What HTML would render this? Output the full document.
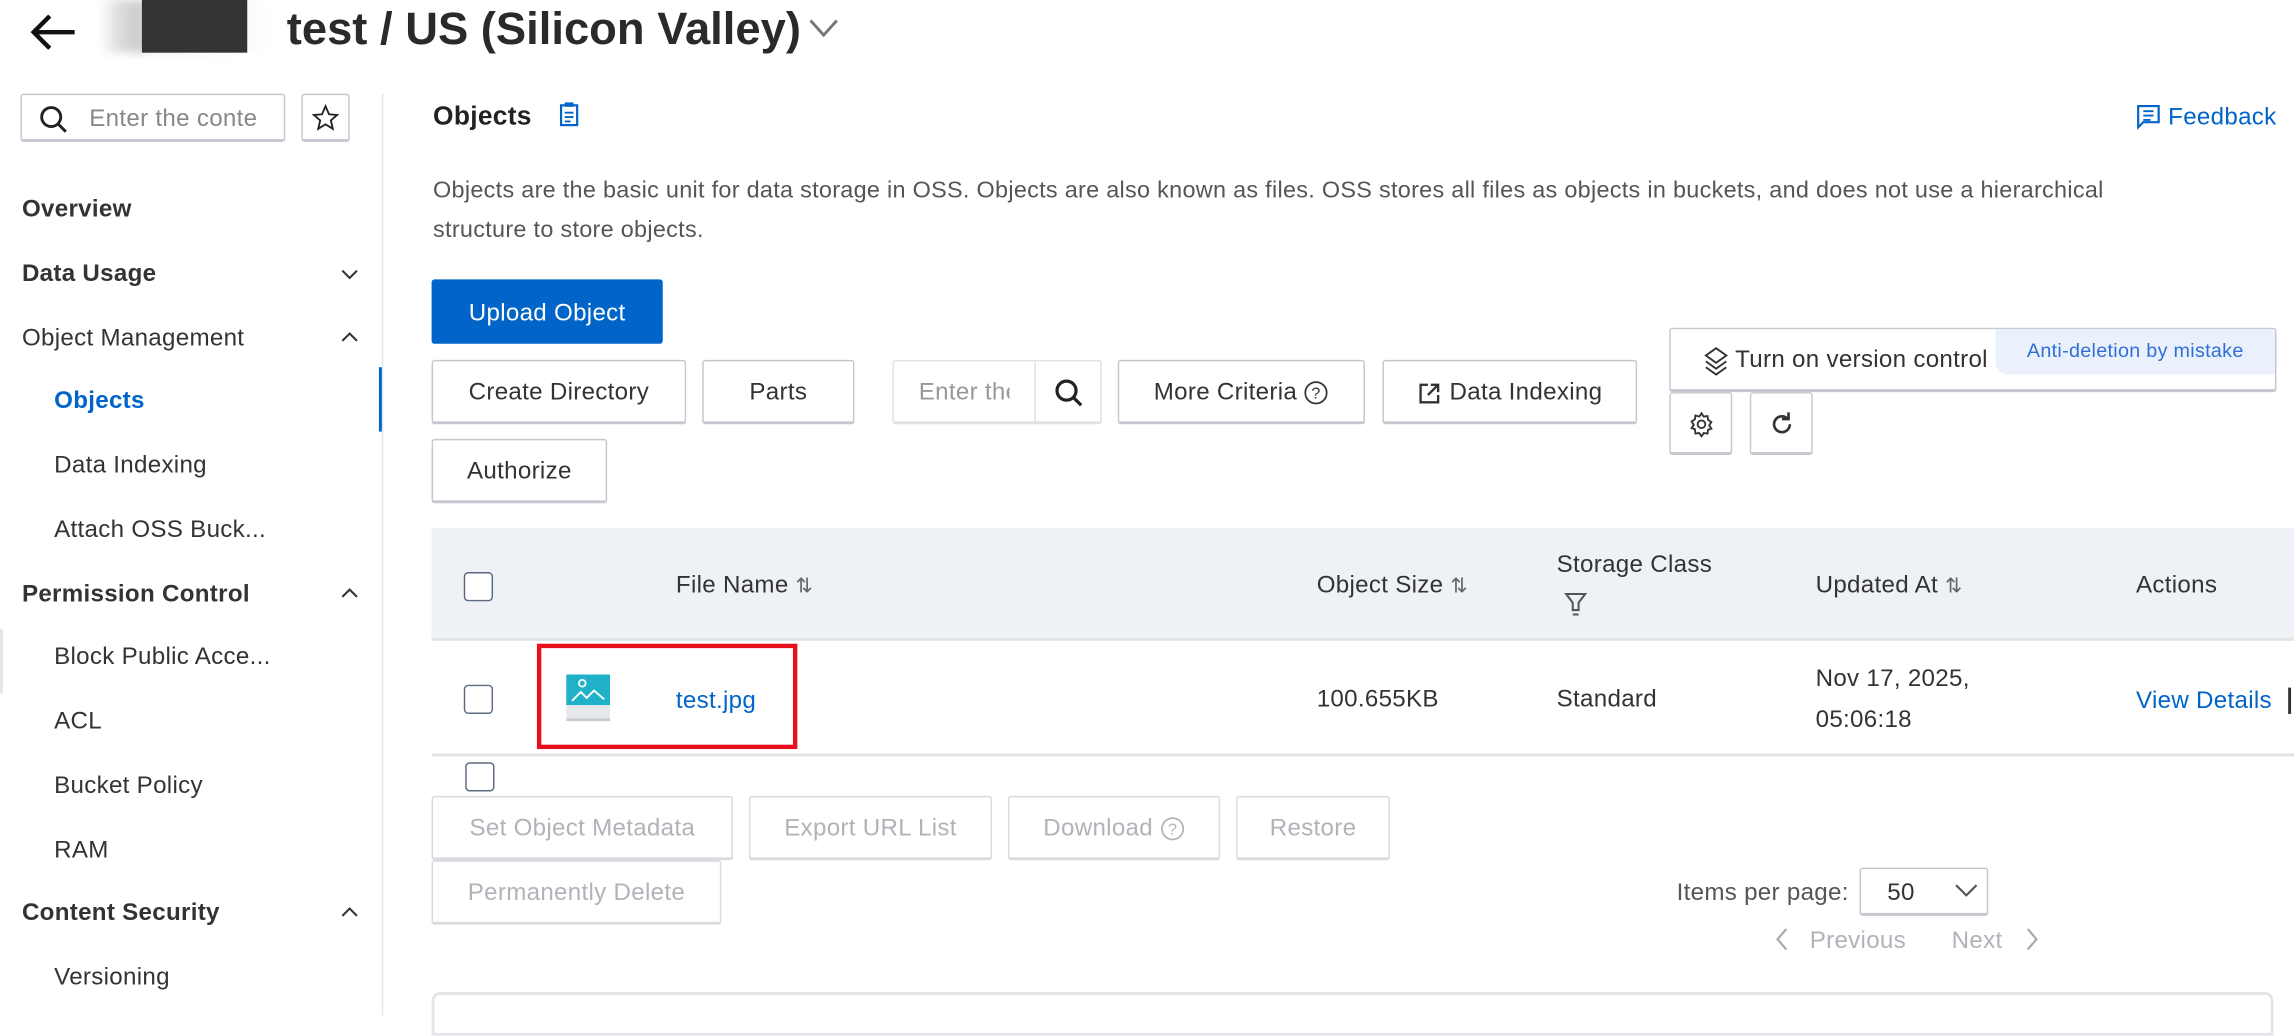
<!DOCTYPE html>
<html><head><meta charset="utf-8"><style>
html,body{margin:0;padding:0;background:#fff;overflow:hidden}
body{width:2294px;height:1016px}
#c{position:absolute;left:0;top:0;width:1568px;height:694px;transform:scale(1.46301);transform-origin:0 0;font-family:"Liberation Sans",sans-serif;color:#333;font-size:16.5px;letter-spacing:0.2px}
.a{position:absolute;white-space:nowrap}
.btn{position:absolute;box-sizing:border-box;border:1px solid #c5c8cf;border-bottom:2px solid #c5c8cf;border-radius:2px;background:#fff;display:flex;align-items:center;justify-content:center;font-size:16.5px;color:#333;white-space:nowrap;padding-top:2px}
.dis{color:#b0b3b8;border-color:#d8dade}
.nb{font-weight:bold;color:#333}
.cb{position:absolute;width:20px;height:20px;border:1.5px solid #5c6b80;border-radius:3px;box-sizing:border-box;background:#fff}
</style></head><body><div id="c">
<svg class="a" style="left:19px;top:8px" width="34" height="28" viewBox="0 0 34 28"><path d="M32 14H4M15 3L4 14l11 11" stroke="#111" stroke-width="3" fill="none"/></svg>
<div class="a" style="left:68px;top:0;width:130px;height:36px;background:linear-gradient(90deg,#fff,#ddd 10%,#ccc 20%,#e5e5e5 30%,#fff 90%);filter:blur(3px)"></div>
<div class="a" style="left:97px;top:0;width:72px;height:36px;background:#333"></div>
<div class="a" style="left:196px;top:2px;font-size:31px;font-weight:bold;color:#2a2a2a;letter-spacing:0px">test / US (Silicon Valley)</div>
<svg class="a" style="left:553px;top:12px" width="20" height="14"><path d="M1 2l9 10 9-10" stroke="#777" stroke-width="2" fill="none"/></svg>
<div class="a" style="left:14px;top:64px;width:181px;height:33px;border:1px solid #c5c8cf;border-bottom-width:2px;box-sizing:border-box;border-radius:2px"></div>
<svg class="a" style="left:26px;top:71px" width="22" height="22"><circle cx="9" cy="9" r="6.5" stroke="#222" stroke-width="2" fill="none"/><path d="M14 14l5 5" stroke="#222" stroke-width="2"/></svg>
<div class="a" style="left:61px;top:72px;color:#888;width:118px;overflow:hidden">Enter the conte</div>
<div class="a" style="left:206px;top:64px;width:33px;height:33px;border:1px solid #c5c8cf;border-bottom-width:2px;box-sizing:border-box;border-radius:2px"></div>
<svg class="a" style="left:213px;top:71px" width="19" height="19" viewBox="0 0 24 24"><path d="M12 2l3 7 7 .6-5.4 4.7 1.7 7.2L12 17.7 5.7 21.5l1.7-7.2L2 9.6 9 9z" stroke="#222" stroke-width="1.6" fill="none"/></svg>
<div class="a" style="left:261px;top:64px;width:1px;height:630px;background:#e3e5e8"></div>
<div class="a" style="left:259px;top:251px;width:2px;height:44px;background:#0064c8"></div>
<div class="a nb" style="left:15px;top:134px">Overview</div>
<div class="a nb" style="left:15px;top:178px">Data Usage</div>
<svg class="a" style="left:233px;top:183px" width="12" height="9"><path d="M1 2l5 5 5-5" stroke="#333" stroke-width="1.4" fill="none"/></svg>
<div class="a" style="left:15px;top:222px">Object Management</div>
<svg class="a" style="left:233px;top:226px" width="12" height="9"><path d="M1 7l5-5 5 5" stroke="#333" stroke-width="1.4" fill="none"/></svg>
<div class="a" style="left:37px;top:265px;color:#0064c8;font-weight:bold">Objects</div>
<div class="a" style="left:37px;top:309px">Data Indexing</div>
<div class="a" style="left:37px;top:353px">Attach OSS Buck...</div>
<div class="a nb" style="left:15px;top:397px">Permission Control</div>
<svg class="a" style="left:233px;top:401px" width="12" height="9"><path d="M1 7l5-5 5 5" stroke="#333" stroke-width="1.4" fill="none"/></svg>
<div class="a" style="left:0;top:430px;width:2px;height:44px;background:#e3e5e8"></div>
<div class="a" style="left:37px;top:440px">Block Public Acce...</div>
<div class="a" style="left:37px;top:484px">ACL</div>
<div class="a" style="left:37px;top:528px">Bucket Policy</div>
<div class="a" style="left:37px;top:572px">RAM</div>
<div class="a nb" style="left:15px;top:615px">Content Security</div>
<svg class="a" style="left:233px;top:619px" width="12" height="9"><path d="M1 7l5-5 5 5" stroke="#333" stroke-width="1.4" fill="none"/></svg>
<div class="a" style="left:37px;top:659px">Versioning</div>
<div class="a" style="left:296px;top:69px;font-size:18px;font-weight:bold;color:#222">Objects</div>
<svg class="a" style="left:382px;top:69px" width="14" height="18"><rect x="1.5" y="3" width="11" height="13.5" stroke="#0064c8" stroke-width="1.5" fill="none"/><rect x="4" y="1" width="6" height="3" fill="#0064c8"/><path d="M4 8h6M4 11h6M4 14h4" stroke="#0064c8" stroke-width="1.3"/></svg>
<svg class="a" style="left:1460px;top:71px" width="17" height="18"><path d="M1.5 1.5h14v11H5l-3.5 3.5z" stroke="#0064c8" stroke-width="1.5" fill="none"/><path d="M5 5h7M5 8h7M5 11h5" stroke="#0064c8" stroke-width="1.3"/></svg>
<div class="a" style="left:1482px;top:71px;color:#0064c8">Feedback</div>
<div class="a" style="left:296px;top:117px;font-size:16px;color:#555;line-height:27px;white-space:normal;width:1200px">Objects are the basic unit for data storage in OSS. Objects are also known as files. OSS stores all files as objects in buckets, and does not use a hierarchical structure to store objects.</div>
<div class="btn" style="left:295px;top:191px;width:158px;height:44px;background:#0064c8;border:none;color:#fff">Upload Object</div>
<div class="btn" style="left:295px;top:246px;width:174px;height:44px">Create Directory</div>
<div class="btn" style="left:480px;top:246px;width:104px;height:44px">Parts</div>
<div class="btn" style="left:610px;top:246px;width:143px;height:44px;border-color:#dfe1e5;justify-content:flex-start"><span style="color:#999;margin-left:17px;width:62px;overflow:hidden">Enter the</span></div>
<div class="a" style="left:707px;top:247px;width:1px;height:42px;background:#dfe1e5"></div>
<svg class="a" style="left:720px;top:258px" width="22" height="22"><circle cx="9" cy="9" r="6.5" stroke="#222" stroke-width="2.2" fill="none"/><path d="M14 14l5 5" stroke="#222" stroke-width="2.2"/></svg>
<div class="btn" style="left:764px;top:246px;width:169px;height:44px">More Criteria&nbsp;<svg width="17" height="17"><circle cx="8.5" cy="8.5" r="7.3" stroke="#333" stroke-width="1.2" fill="none"/><text x="8.5" y="12.5" font-size="11" text-anchor="middle" fill="#333" font-family="Liberation Sans">?</text></svg></div>
<div class="btn" style="left:945px;top:246px;width:174px;height:44px"><svg width="16" height="16" style="margin-right:6px"><path d="M7 2H2v12h12V9" stroke="#333" stroke-width="1.6" fill="none"/><path d="M9 2h5v5M14 2L7 9" stroke="#333" stroke-width="1.6" fill="none"/></svg>Data Indexing</div>
<div class="btn" style="left:1141px;top:224px;width:415px;height:44px;justify-content:flex-start"><svg width="18" height="20" style="margin-left:22px;margin-right:4px"><path d="M9 1l7 5-7 5-7-5z M2 10l7 5 7-5 M2 14l7 5 7-5" stroke="#333" stroke-width="1.3" fill="none"/></svg>Turn on version control</div>
<div class="a" style="left:1364px;top:225px;width:191px;height:31px;background:#eaf1fd;border-radius:0 2px 0 8px;color:#2f6fd6;font-size:13.5px;line-height:29px;text-align:center">Anti-deletion by mistake</div>
<div class="btn" style="left:1141px;top:268px;width:43px;height:43px"><svg width="18" height="18" viewBox="0 0 24 24"><path d="M12 2l2 3 3.5-.5.5 3.5 3 2-2 3 2 3-3 1-.5 3.5-3.5-.5-2 3-2-3-3.5.5L6 16.5 3 15.5l2-3-2-3 3-2 .5-3.5L10 5z" stroke="#333" stroke-width="1.7" fill="none"/><circle cx="12" cy="12" r="3.5" stroke="#333" stroke-width="1.7" fill="none"/></svg></div>
<div class="btn" style="left:1196px;top:268px;width:43px;height:43px"><svg width="18" height="18" viewBox="0 0 20 20"><path d="M16 10a6 6 0 1 1-2-4.5" stroke="#333" stroke-width="2" fill="none"/><path d="M15 1v5h-5" stroke="#333" stroke-width="2" fill="none"/></svg></div>
<div class="btn" style="left:295px;top:300px;width:120px;height:44px">Authorize</div>
<div class="a" style="left:295px;top:361px;width:1273px;height:75px;background:#eef1f6;border-bottom:2px solid #e2e4e8"></div>
<div class="cb" style="left:317px;top:391px"></div>
<div class="a" style="left:462px;top:391px">File Name <span style="color:#666;font-size:14px">⇅</span></div>
<div class="a" style="left:900px;top:391px">Object Size <span style="color:#666;font-size:14px">⇅</span></div>
<div class="a" style="left:1064px;top:377px">Storage Class</div>
<svg class="a" style="left:1069px;top:404px" width="16" height="18"><path d="M1.5 2h13l-4.5 6v5h-4V8z" stroke="#555" stroke-width="1.4" fill="none"/><path d="M6 16h4" stroke="#555" stroke-width="1.4"/></svg>
<div class="a" style="left:1241px;top:391px">Updated At <span style="color:#666;font-size:14px">⇅</span></div>
<div class="a" style="left:1460px;top:391px">Actions</div>
<div class="a" style="left:295px;top:515px;width:1273px;height:2px;background:#e2e4e8"></div>
<div class="cb" style="left:317px;top:468px"></div>
<div class="a" style="left:367px;top:440px;width:172px;height:66px;border:3px solid #e8101f"></div>
<svg class="a" style="left:387px;top:461px" width="30" height="32"><rect width="30" height="21" fill="#1fb1c8"/><rect y="21" width="30" height="10" fill="#e6e8eb"/><rect y="30" width="30" height="2" fill="#c8ccd0"/><circle cx="11" cy="6" r="2.3" stroke="#fff" stroke-width="1.2" fill="none"/><path d="M4 18l6-6 4 4 5-5 7 6" stroke="#fff" stroke-width="1.3" fill="none"/></svg>
<div class="a" style="left:462px;top:470px;color:#0064c8">test.jpg</div>
<div class="a" style="left:900px;top:469px">100.655KB</div>
<div class="a" style="left:1064px;top:469px">Standard</div>
<div class="a" style="left:1241px;top:455px">Nov 17, 2025,</div>
<div class="a" style="left:1241px;top:483px">05:06:18</div>
<div class="a" style="left:1460px;top:470px;color:#0064c8">View Details</div>
<div class="a" style="left:1564px;top:470px;width:2px;height:18px;background:#333"></div>
<div class="cb" style="left:318px;top:521px"></div>
<div class="btn dis" style="left:295px;top:544px;width:206px;height:44px">Set Object Metadata</div>
<div class="btn dis" style="left:512px;top:544px;width:166px;height:44px">Export URL List</div>
<div class="btn dis" style="left:689px;top:544px;width:145px;height:44px">Download&nbsp;<svg width="17" height="17"><circle cx="8.5" cy="8.5" r="7.3" stroke="#b0b3b8" stroke-width="1.2" fill="none"/><text x="8.5" y="12.5" font-size="11" text-anchor="middle" fill="#b0b3b8" font-family="Liberation Sans">?</text></svg></div>
<div class="btn dis" style="left:845px;top:544px;width:105px;height:44px">Restore</div>
<div class="btn dis" style="left:295px;top:588px;width:198px;height:44px">Permanently Delete</div>
<div class="a" style="left:1146px;top:601px;color:#555">Items per page:</div>
<div class="btn" style="left:1271px;top:593px;width:88px;height:33px;justify-content:flex-start"><span style="margin-left:18px">50</span></div>
<svg class="a" style="left:1336px;top:603px" width="16" height="11"><path d="M1 2l7 7 7-7" stroke="#555" stroke-width="1.5" fill="none"/></svg>
<svg class="a" style="left:1213px;top:634px" width="10" height="16"><path d="M8 1L2 8l6 7" stroke="#aaa" stroke-width="1.5" fill="none"/></svg>
<div class="a" style="left:1237px;top:634px;color:#b0b3b8">Previous</div>
<div class="a" style="left:1334px;top:634px;color:#b0b3b8">Next</div>
<svg class="a" style="left:1384px;top:634px" width="10" height="16"><path d="M2 1l6 7-6 7" stroke="#aaa" stroke-width="1.5" fill="none"/></svg>
<div class="a" style="left:295px;top:678px;width:1259px;height:30px;border:2px solid #e3e5e8;border-radius:6px 6px 0 0;box-sizing:border-box"></div>
</div></body></html>
